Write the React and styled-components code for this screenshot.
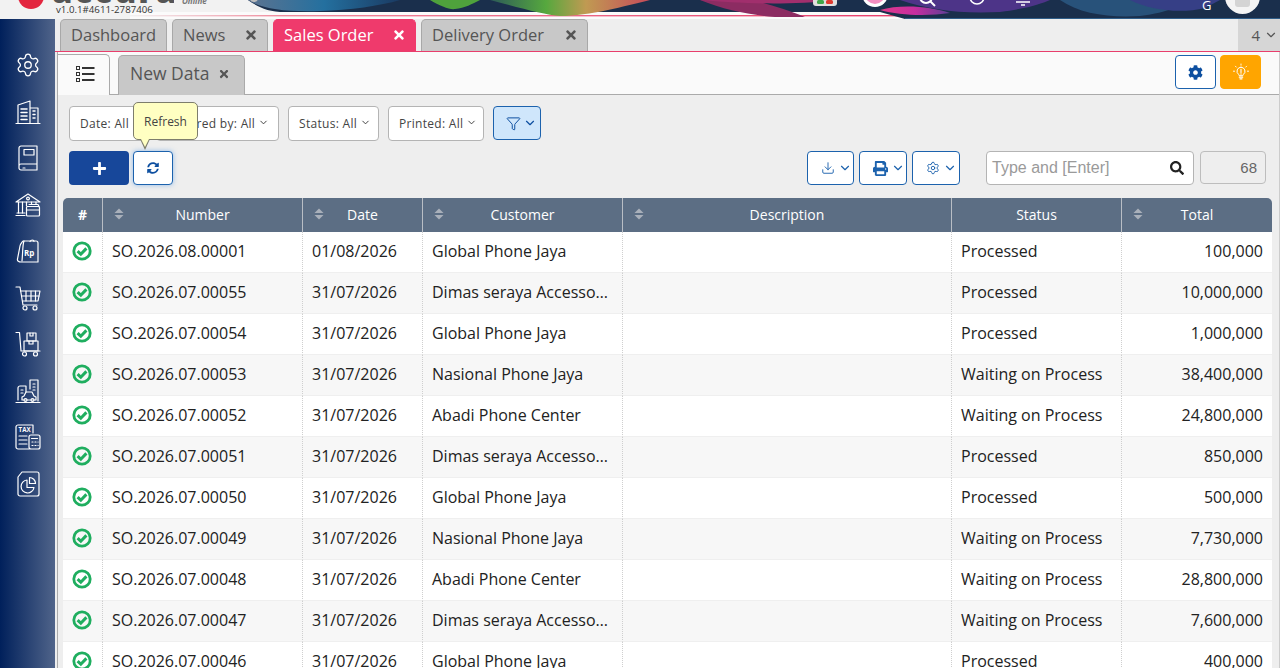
import React from "react";
import styled, { createGlobalStyle } from "styled-components";
import { ChevronDown, Download, Funnel, Settings } from "lucide-react";
import { FaCog, FaPlus, FaPrint, FaSearch, FaSyncAlt, FaTimes } from "react-icons/fa";

const GlobalStyle = createGlobalStyle`
  html, body {
    margin: 0;
    padding: 0;
    height: 100%;
    overflow: hidden;
    background: #eeeeee;
    font-family: "Open Sans", "Noto Sans", sans-serif;
  }
  * { box-sizing: border-box; }
`;

const Page = styled.div`
  display: flex;
  flex-direction: column;
  height: 668px;
  overflow: hidden;
`;

/* ---------- banner ---------- */
const Banner = styled.header`
  position: relative;
  flex: 0 0 19px;
  display: flex;
  align-items: flex-start;
  overflow: hidden;
  background: #f2f2f2;
`;

const BannerArt = styled.svg`
  position: absolute;
  inset: 0;
  width: 1280px;
  height: 19px;
`;

const LogoMark = styled.div`
  position: relative;
  flex: none;
  width: 26px;
  height: 26px;
  margin: -17px 0 0 18px;
  border-radius: 50%;
  background: #e3263f;
`;

const LogoBlock = styled.div`
  position: relative;
  width: 122px;
  margin-left: 8px;
`;

const LogoWord = styled.div`
  height: 5px;
  overflow: hidden;
  font-size: 33px;
  font-weight: 800;
  color: #555;
  letter-spacing: 2px;
  white-space: nowrap;

  span {
    display: block;
    margin-top: -26px;
    line-height: 33px;
  }
`;

const Version = styled.div`
  margin: 0 0 0 4px;
  font-size: 9.7px;
  line-height: 10px;
  color: #333;
  white-space: nowrap;
`;

const OnlineTag = styled.div`
  position: relative;
  margin: -3px 0 0 8px;
  font-size: 8px;
  line-height: 8px;
  font-style: italic;
  font-weight: 700;
  color: #777;
`;

const UserLetter = styled.div`
  position: absolute;
  left: 1202px;
  top: -2px;
  font-size: 13px;
  line-height: 14px;
  color: #fff;
`;

const UserAvatar = styled.div`
  position: absolute;
  left: 1225px;
  top: -21px;
  width: 35px;
  height: 35px;
  border-radius: 50%;
  background: #f4f4f4;
  display: flex;
  align-items: flex-end;
  justify-content: center;
  padding-bottom: 7px;

  &::after {
    content: "";
    width: 15px;
    height: 15px;
    border-radius: 3px;
    background: #d4d4d4;
  }
`;

/* ---------- frame ---------- */
const Body = styled.div`
  flex: 1;
  display: flex;
  min-height: 0;
`;

const Sidebar = styled.nav`
  flex: 0 0 55px;
  display: flex;
  flex-direction: column;
  align-items: center;
  gap: 20.5px;
  padding: 33px 0 0;
  background: linear-gradient(90deg, #00205b 0%, #50648a 100%);
`;

const SideIcon = styled.svg`
  flex: none;
  width: 26px;
  height: 26px;
  fill: none;
  stroke: #fff;
  stroke-width: 1.2;
  stroke-linecap: round;
  stroke-linejoin: round;

  text {
    fill: #fff;
    stroke: none;
    font-family: "Open Sans", sans-serif;
    font-weight: 700;
  }
`;

const Main = styled.main`
  flex: 1;
  min-width: 0;
  display: flex;
  flex-direction: column;
`;

const TabBar = styled.div`
  flex: 0 0 33px;
  display: flex;
  align-items: flex-end;
  gap: 5px;
  padding-left: 5px;
  border-bottom: 1px solid #e83e6c;
  background: #eeeeee;
`;

const Tab = styled.div`
  height: 32px;
  display: flex;
  align-items: center;
  justify-content: space-between;
  width: ${(p) => p.$w}px;
  padding: 0 9px 2px 10px;
  border: 1px solid ${(p) => (p.$active ? "#ef3a6c" : "#a8a8a8")};
  border-bottom: none;
  border-radius: 5px 5px 0 0;
  background: ${(p) => (p.$active ? "#ef3a6c" : "#c8c8c8")};
  color: ${(p) => (p.$active ? "#fff" : "#555")};
  font-size: 16.5px;
  white-space: nowrap;

  svg {
    font-size: 14px;
    margin-top: 1px;
    color: ${(p) => (p.$active ? "#fff" : "#555")};
  }
`;

const TabCount = styled.div`
  margin-left: auto;
  width: 42px;
  height: 32px;
  display: flex;
  align-items: center;
  justify-content: flex-end;
  gap: 4px;
  padding-right: 2px;
  background: #d6d6d6;
  color: #555;
  font-size: 15px;
`;

const Workspace = styled.section`
  flex: 1;
  min-height: 0;
  margin-left: 2px;
  border-left: 1px solid #aaa;
  border-right: 1px solid #ccc;
  background: #eeeeee;
`;

const SubHeader = styled.div`
  height: 43px;
  display: flex;
  align-items: flex-end;
  gap: 8px;
  padding: 0 18px 0 0;
  border-bottom: 1px solid #aaa;
  background: #fafafa;
`;

const ListTab = styled.div`
  width: 52px;
  height: 41px;
  margin-bottom: -1px;
  display: flex;
  align-items: center;
  justify-content: center;
  padding: 0 0 2px 2px;
  border: 1px solid #aaa;
  border-left: none;
  border-bottom: none;
  border-radius: 0 5px 0 0;
  background: #fafafa;
`;

const SubTab = styled.div`
  width: 127px;
  height: 40px;
  margin-bottom: -1px;
  display: flex;
  align-items: center;
  gap: 8px;
  padding: 0 0 5px 11px;
  border: 1px solid #aaa;
  border-bottom: none;
  border-radius: 5px 5px 0 0;
  background: #c8c8c8;
  color: #555;
  font-size: 17.5px;
  white-space: nowrap;

  svg {
    font-size: 12px;
    margin-top: 2px;
  }
`;

const SubActions = styled.div`
  margin: 0 0 5px auto;
  display: flex;
  gap: 4px;
`;

const ActionButton = styled.button`
  width: 41px;
  height: 34px;
  display: flex;
  align-items: center;
  justify-content: center;
  padding: 0;
  border: 1px solid ${(p) => (p.$orange ? "#ffa500" : "#1c62ad")};
  border-radius: 4px;
  background: ${(p) => (p.$orange ? "#ffa500" : "#fff")};
  color: #0d4fa0;
  font-size: 15px;
`;

const Content = styled.div`
  padding: 11px 6px 0 5px;
`;

const FilterRow = styled.div`
  display: flex;
  gap: 9px;
  padding-left: 6px;
`;

const FilterButton = styled.button`
  position: relative;
  height: 35px;
  width: ${(p) => p.$w}px;
  display: flex;
  align-items: center;
  gap: 3px;
  padding: 0 0 0 10px;
  border: 1px solid #b4b4b4;
  border-radius: 4px;
  background: #fff;
  color: #444;
  font: 400 12px "Open Sans", sans-serif;
  letter-spacing: 0.3px;
  white-space: nowrap;

  svg {
    color: #333;
    margin-top: -3px;
  }
`;

const FunnelButton = styled.button`
  width: 48px;
  height: 34px;
  display: flex;
  align-items: center;
  gap: 2px;
  padding: 0 0 0 12px;
  border: 1px solid #1c62ad;
  border-radius: 4px;
  background: #cfe6fb;
  color: #0d4fa0;
`;

const ToolRow = styled.div`
  display: flex;
  align-items: flex-start;
  margin-top: 10px;
  padding: 0 7px 0 6px;
`;

const AddButton = styled.button`
  width: 60px;
  height: 34px;
  display: flex;
  align-items: center;
  justify-content: center;
  padding: 0;
  border: none;
  border-radius: 4px;
  background: #17479a;
  color: #fff;
  font-size: 15px;
`;

const RefreshWrap = styled.div`
  position: relative;
  margin-left: 4px;
`;

const RefreshButton = styled.button`
  width: 40px;
  height: 34px;
  display: flex;
  align-items: center;
  justify-content: center;
  padding: 0;
  border: 1px solid #1c62ad;
  border-radius: 4px;
  background: #fff;
  box-shadow: 0 0 5px rgba(60, 140, 230, 0.5);
  color: #0d4fa0;
  font-size: 12px;
`;

const Tooltip = styled.div`
  position: absolute;
  left: 0;
  top: -49px;
  width: 65px;
  height: 38px;
  display: flex;
  align-items: center;
  justify-content: center;
  border: 1px solid #7d7d6c;
  border-radius: 5px;
  background: #ffffc2;
  color: #444;
  font-size: 12px;

  &::after {
    content: "";
    position: absolute;
    left: 6px;
    bottom: -11px;
    border-left: 5px solid transparent;
    border-right: 5px solid transparent;
    border-top: 11px solid #7d7d6c;
  }

  &::before {
    content: "";
    position: absolute;
    z-index: 1;
    left: 7px;
    bottom: -8px;
    border-left: 4px solid transparent;
    border-right: 4px solid transparent;
    border-top: 8px solid #ffffc2;
  }
`;

const OutlineGroup = styled.div`
  margin-left: auto;
  display: flex;
  gap: 5px;
`;

const OutlineButton = styled.button`
  width: ${(p) => p.$w}px;
  height: 34px;
  display: flex;
  align-items: center;
  gap: 3px;
  padding: 0 0 0 13px;
  border: 1px solid #1c62ad;
  border-radius: 4px;
  background: #fff;
  color: #1c62ad;
`;

const SearchBox = styled.div`
  width: 208px;
  height: 34px;
  margin-left: 26px;
  display: flex;
  align-items: center;
  justify-content: space-between;
  padding: 0 9px 0 5px;
  border: 1px solid #b4b4b4;
  border-radius: 4px;
  background: #fff;
  color: #9a9a9a;
  font: 400 16px "Liberation Sans", Arial, sans-serif;

  svg {
    color: #222;
    font-size: 14px;
  }
`;

const CountBox = styled.div`
  width: 66px;
  height: 33px;
  margin-left: 6px;
  display: flex;
  align-items: center;
  justify-content: flex-end;
  padding-right: 8px;
  border: 1px solid #bdbdbd;
  border-radius: 4px;
  color: #666;
  font: 400 15px "Liberation Sans", Arial, sans-serif;
`;

/* ---------- table ---------- */
const Table = styled.table`
  width: 1209px;
  margin-top: 13px;
  table-layout: fixed;
  border-collapse: separate;
  border-spacing: 0;
  font-size: 16px;
  color: #222;
`;

const Head = styled.th`
  height: 34px;
  padding: 0 11px 2px;
  background: #5c6e84;
  border-left: ${(p) => (p.$first ? "none" : "1px solid #b9bec5")};
  border-radius: ${(p) =>
    p.$first ? "5px 0 0 0" : p.$last ? "0 5px 0 0" : "0"};
  color: #fff;
  font-size: 14px;
  font-weight: ${(p) => (p.$first ? 700 : 400)};
`;

const HeadInner = styled.div`
  display: grid;
  grid-template-columns: 1fr auto 1fr;
  align-items: center;
`;

const SortSlot = styled.span`
  justify-self: start;
  display: flex;
`;

const Cell = styled.td`
  height: 41px;
  padding: ${(p) =>
    p.$first ? "0 1px 0 0" : p.$right ? "0 9px 2px 9px" : "0 13px 2px 9px"};
  border-left: ${(p) => (p.$first ? "none" : "1px dotted #cfcfcf")};
  border-bottom: 1px solid #efefef;
  background: ${(p) => (p.$alt ? "#f7f7f7" : "#fff")};
  text-align: ${(p) => (p.$right ? "right" : "left")};
  white-space: nowrap;
  overflow: hidden;
  text-overflow: ellipsis;
`;

const CheckSvg = styled.svg`
  display: block;
  width: 20px;
  height: 20px;
  margin: -2px auto 0;
  fill: none;
  stroke: #1fae5f;
`;

const Chevron = () => <ChevronDown size={14} strokeWidth={2} />;

const SortIcon = () => (
  <svg width="10" height="12" viewBox="0 0 10 12" fill="#a9b0ba">
    <path d="M5 0.5 L9.5 5 H0.5 Z" />
    <path d="M5 11.5 L9.5 7 H0.5 Z" />
  </svg>
);

const CheckIcon = () => (
  <CheckSvg viewBox="0 0 20 20">
    <circle cx="10" cy="10" r="8.2" strokeWidth="2.8" />
    <path d="M5.6 10.2 L8.8 13.2 L14.4 7.4" strokeWidth="3" />
  </CheckSvg>
);

const columns = [
  { label: "#", width: 39 },
  { label: "Number", width: 200, sort: true },
  { label: "Date", width: 120, sort: true },
  { label: "Customer", width: 200, sort: true },
  { label: "Description", width: 329, sort: true },
  { label: "Status", width: 170 },
  { label: "Total", width: 151, sort: true },
];

const rows = [
  ["SO.2026.08.00001", "01/08/2026", "Global Phone Jaya", "Processed", "100,000"],
  ["SO.2026.07.00055", "31/07/2026", "Dimas seraya Accessories", "Processed", "10,000,000"],
  ["SO.2026.07.00054", "31/07/2026", "Global Phone Jaya", "Processed", "1,000,000"],
  ["SO.2026.07.00053", "31/07/2026", "Nasional Phone Jaya", "Waiting on Process", "38,400,000"],
  ["SO.2026.07.00052", "31/07/2026", "Abadi Phone Center", "Waiting on Process", "24,800,000"],
  ["SO.2026.07.00051", "31/07/2026", "Dimas seraya Accessories", "Processed", "850,000"],
  ["SO.2026.07.00050", "31/07/2026", "Global Phone Jaya", "Processed", "500,000"],
  ["SO.2026.07.00049", "31/07/2026", "Nasional Phone Jaya", "Waiting on Process", "7,730,000"],
  ["SO.2026.07.00048", "31/07/2026", "Abadi Phone Center", "Waiting on Process", "28,800,000"],
  ["SO.2026.07.00047", "31/07/2026", "Dimas seraya Accessories", "Waiting on Process", "7,600,000"],
  ["SO.2026.07.00046", "31/07/2026", "Global Phone Jaya", "Processed", "400,000"],
];

const filters = [
  { label: "Date: All", width: 78 },
  { label: "Ordered by: All", width: 123 },
  { label: "Status: All", width: 91 },
  { label: "Printed: All", width: 96 },
];

const BannerDrawing = () => (
  <BannerArt viewBox="0 0 1280 19" preserveAspectRatio="none">
    <defs>
      <linearGradient id="blueBand" x1="0" x2="1">
        <stop offset="0" stopColor="#5d7390" />
        <stop offset="0.5" stopColor="#24709f" />
        <stop offset="1" stopColor="#1a3a62" />
      </linearGradient>
      <linearGradient id="rainbow" x1="0" x2="1">
        <stop offset="0" stopColor="#2c5a58" />
        <stop offset="0.35" stopColor="#56a83e" />
        <stop offset="0.6" stopColor="#c09a52" />
        <stop offset="1" stopColor="#c64a5a" />
      </linearGradient>
      <linearGradient id="pinkLine" x1="0" x2="1">
        <stop offset="0" stopColor="#f2f2f2" />
        <stop offset="0.2" stopColor="#f08a9c" />
        <stop offset="1" stopColor="#e83e6c" />
      </linearGradient>
      <linearGradient id="magenta" x1="0" x2="1">
        <stop offset="0" stopColor="#e03a8a" />
        <stop offset="0.5" stopColor="#c52ea0" />
        <stop offset="1" stopColor="#5b3f96" />
      </linearGradient>
    </defs>
    <rect x="130" y="12" width="780" height="7" fill="#fbfbfb" />
    <rect x="130" y="15" width="770" height="1.4" fill="url(#pinkLine)" />
    <path d="M248 0 C258 7 268 12 285 12 H880 L905 19 H1280 V0 Z" fill="#1a2f4c" />
    <path d="M248 0 C262 9 285 12 320 11 C350 10 380 6 400 0 Z" fill="url(#blueBand)" />
    <path d="M430 0 C440 6 450 10 455 9 C465 8 472 4 480 0 Z" fill="#4fa23c" />
    <path d="M490 0 C520 8 545 15 560 16 C590 16 625 6 650 0 Z" fill="url(#rainbow)" />
    <path d="M700 0 C725 10 750 15 775 17 L805 17 C790 10 765 4 755 0 Z" fill="#8c2c62" />
    <path d="M700 0 C740 3 780 6 840 0 Z" fill="#a12f6d" />
    <path d="M880 10 C900 16 930 16 950 13 C930 6 900 4 880 10 Z" fill="url(#magenta)" />
    <path d="M900 0 C930 10 960 14 1000 12 C1030 8 1040 4 1050 0 Z" fill="#4d3488" />
    <path d="M1060 0 C1080 14 1110 18 1140 16 C1170 12 1180 6 1185 0 Z" fill="#28527a" />
    <path d="M1130 0 C1150 10 1180 14 1205 8 L1220 0 Z" fill="#363f86" />
    <rect x="905" y="18" width="375" height="1" fill="#2f5e8a" />
    <rect x="813" y="-6" width="24" height="12" rx="3" fill="#e0dede" />
    <rect x="817" y="0" width="7" height="4" rx="1.5" fill="#3fa648" />
    <rect x="826" y="0" width="7" height="4" rx="1.5" fill="#e0392f" />
    <circle cx="875" cy="-6" r="13" fill="#fff" />
    <circle cx="875" cy="-6" r="10" fill="#f58fc1" />
    <circle cx="926" cy="-3" r="6" fill="none" stroke="#fff" strokeWidth="2" />
    <path d="M930 1 L935 6" stroke="#fff" strokeWidth="2" />
    <circle cx="977" cy="-3" r="7" fill="none" stroke="#fff" strokeWidth="1.6" />
    <path d="M1016 2 H1030 M1021 5 H1025" stroke="#fff" strokeWidth="1.6" />
    <circle cx="254" cy="-2" r="4" fill="#bdbdbd" />
  </BannerArt>
);

const ListIcon = () => (
  <svg width="20" height="18" viewBox="0 0 20 18" fill="none" stroke="#333">
    <rect x="1.5" y="1.5" width="3" height="3" strokeWidth="1" />
    <rect x="1.5" y="7.5" width="3" height="3" strokeWidth="1" />
    <rect x="1.5" y="13.5" width="3" height="3" strokeWidth="1" />
    <path d="M7 3h12.5M7 9h12.5M7 15h12.5" strokeWidth="2" />
  </svg>
);

const BulbIcon = () => (
  <svg width="18" height="18" viewBox="0 0 18 18" fill="none" stroke="#fff" strokeLinecap="round">
    <path d="M9 4.2a4 4 0 0 0-2.4 7.2c.4.4.6.8.6 1.3h3.6c0-.5.2-.9.6-1.3A4 4 0 0 0 9 4.2Z" strokeWidth="1" />
    <path d="M7.4 14.2h3.2M8 15.8h2" strokeWidth="1.3" />
    <path d="M9 6.2v3.4M9 10.8v.4" strokeWidth="1.1" />
    <path d="M9 1v1.2M3.4 3.2l.9.9M14.6 3.2l-.9.9M1.4 8.2h1.2M15.4 8.2h1.2" strokeWidth=".9" />
  </svg>
);

const sideIcons = [
  <SideIcon as={Settings} key="gear" strokeWidth={1.3} />,
  <SideIcon viewBox="0 0 26 26" key="company">
    <path d="M1 24.5h24M3 24V6L15 2v22M15 9h8v15" />
    <path d="M6 10h6M6 13.5h6M6 17h6M6 20.5h6" strokeWidth="1.5" />
    <path d="M18 12h2M18 15.5h2M18 19h2" strokeWidth="1.5" />
  </SideIcon>,
  <SideIcon viewBox="0 0 26 26" key="book">
    <path d="M4 21V3a2 2 0 0 1 2-2h16v24H6a2 2 0 0 1-2-2v-2a2 2 0 0 1 2-2h16" />
    <rect x="9" y="4.5" width="10" height="5.5" />
    <path d="M8 23h2" />
  </SideIcon>,
  <SideIcon viewBox="0 0 26 26" key="bank">
    <path d="M1 10 13 2l12 8H1Z" />
    <circle cx="13" cy="6.5" r="1.4" />
    <path d="M3.5 10v11M7.5 10v11M11.5 10v4M16.5 10v2M21 10v2" />
    <path d="M1 23.5h9M2 21h8" />
    <rect x="11.5" y="14.5" width="13" height="9.5" rx="1" />
    <path d="M11.5 18h13M14 12.5h9l1 2" />
  </SideIcon>,
  <SideIcon viewBox="0 0 26 26" key="bag">
    <path d="M8 3h8l5 0c1 0 2 1 2 2v19H6c-2 0-4-1-3.5-3L5 8c.3-2 1.5-3 3-5Z" />
    <path d="M9 3c-1.5 4-1 9-2 20M15 3.5c1-2 4-2 4 0" />
    <text x="9" y="18" fontSize="8">Rp</text>
  </SideIcon>,
  <SideIcon viewBox="0 0 26 26" key="cart">
    <path d="M1 2h4l3 18h14" />
    <path d="M5.5 6H25l-2 10H7.5" />
    <path d="M11 6v10M16 6v10M20.5 6v10M6.5 11h17.5" />
    <circle cx="10" cy="23" r="2" />
    <circle cx="20" cy="23" r="2" />
  </SideIcon>,
  <SideIcon viewBox="0 0 26 26" key="trolley">
    <path d="M1 1.5h3.5L6 20h19" />
    <rect x="9" y="10" width="14" height="10" />
    <rect x="12" y="2" width="9" height="8" />
    <path d="M15 2v3h3V2M14 10v3h4v-3" />
    <circle cx="9.5" cy="23" r="2" />
    <circle cx="20.5" cy="23" r="2" />
  </SideIcon>,
  <SideIcon viewBox="0 0 26 26" key="city">
    <path d="M1 24.5h24" />
    <path d="M3 22V10c0-1 1-2 2-2h6v6" />
    <path d="M15 11V2h8v21" />
    <path d="M18 6h2M18 9h2M18 12h2M6 12h2M6 15h2" />
    <path d="M7 22v-3l2-1 2-4h6l2 4 2 1v3H7Z" />
    <circle cx="10.5" cy="22" r="1.5" />
    <circle cx="17.5" cy="22" r="1.5" />
  </SideIcon>,
  <SideIcon viewBox="0 0 26 26" key="tax">
    <path d="M14 25H3c-1 0-2-1-2-2V3c0-1 1-2 2-2h15v8" />
    <text x="3.6" y="8" fontSize="6.2">TAX</text>
    <path d="M4 12h8M4 16h8M4 20h8" />
    <rect x="14" y="11" width="11" height="14" rx="2" />
    <path d="M16.5 14.5h6M17 18h1M20 18h1M23 18h.1M17 21.5h1M20 21.5h1M23 21.5h.1" />
  </SideIcon>,
  <SideIcon viewBox="0 0 26 26" key="report">
    <path d="M7 1h15c1 0 2 1 2 2v20c0 1-1 2-2 2H5c-1 0-2-1-2-2V6l4-5Z" />
    <path d="M12 9a6.5 6.5 0 1 0 7 7.5h-7V9Z" />
    <path d="M14.5 6.5a6 6 0 0 1 6 6h-6v-6Z" />
  </SideIcon>,
];

const App = () => (
  <Page>
    <GlobalStyle />
    <Banner>
      <BannerDrawing />
      <LogoMark />
      <LogoBlock>
        <LogoWord>
          <span>accurate</span>
        </LogoWord>
        <Version>v1.0.1#4611-2787406</Version>
      </LogoBlock>
      <OnlineTag>Online</OnlineTag>
      <UserLetter>G</UserLetter>
      <UserAvatar />
    </Banner>
    <Body>
      <Sidebar>{sideIcons}</Sidebar>
      <Main>
        <TabBar>
          <Tab $w={107}>Dashboard</Tab>
          <Tab $w={96}>
            News <FaTimes />
          </Tab>
          <Tab $w={143} $active>
            Sales Order <FaTimes />
          </Tab>
          <Tab $w={167}>
            Delivery Order <FaTimes />
          </Tab>
          <TabCount>
            4 <Chevron />
          </TabCount>
        </TabBar>
        <Workspace>
          <SubHeader>
            <ListTab>
              <ListIcon />
            </ListTab>
            <SubTab>
              New Data <FaTimes />
            </SubTab>
            <SubActions>
              <ActionButton>
                <FaCog />
              </ActionButton>
              <ActionButton $orange>
                <BulbIcon />
              </ActionButton>
            </SubActions>
          </SubHeader>
          <Content>
            <FilterRow>
              {filters.map((f) => (
                <FilterButton key={f.label} $w={f.width}>
                  {f.label} <ChevronDown size={11} strokeWidth={2} />
                </FilterButton>
              ))}
              <FunnelButton>
                <Funnel size={15} strokeWidth={1.6} />
                <Chevron />
              </FunnelButton>
            </FilterRow>
            <ToolRow>
              <AddButton>
                <FaPlus />
              </AddButton>
              <RefreshWrap>
                <RefreshButton>
                  <FaSyncAlt />
                </RefreshButton>
                <Tooltip>Refresh</Tooltip>
              </RefreshWrap>
              <OutlineGroup>
                <OutlineButton $w={47}>
                  <Download size={14} strokeWidth={1.6} />
                  <Chevron />
                </OutlineButton>
                <OutlineButton $w={48}>
                  <FaPrint size={15} />
                  <Chevron />
                </OutlineButton>
                <OutlineButton $w={48}>
                  <Settings size={14} strokeWidth={1.6} />
                  <Chevron />
                </OutlineButton>
              </OutlineGroup>
              <SearchBox>
                Type and [Enter]
                <FaSearch />
              </SearchBox>
              <CountBox>68</CountBox>
            </ToolRow>
            <Table>
              <colgroup>
                {columns.map((c) => (
                  <col key={c.label} width={c.width} />
                ))}
              </colgroup>
              <thead>
                <tr>
                  {columns.map((c, i) => (
                    <Head key={c.label} $first={i === 0} $last={i === columns.length - 1}>
                      <HeadInner>
                        <SortSlot>{c.sort && <SortIcon />}</SortSlot>
                        {c.label}
                      </HeadInner>
                    </Head>
                  ))}
                </tr>
              </thead>
              <tbody>
                {rows.map((r, idx) => {
                  const alt = idx % 2 === 1;
                  return (
                    <tr key={r[0]}>
                      <Cell $first $alt={alt}>
                        <CheckIcon />
                      </Cell>
                      <Cell $alt={alt}>{r[0]}</Cell>
                      <Cell $alt={alt}>{r[1]}</Cell>
                      <Cell $alt={alt}>{r[2]}</Cell>
                      <Cell $alt={alt} />
                      <Cell $alt={alt}>{r[3]}</Cell>
                      <Cell $alt={alt} $right>
                        {r[4]}
                      </Cell>
                    </tr>
                  );
                })}
              </tbody>
            </Table>
          </Content>
        </Workspace>
      </Main>
    </Body>
  </Page>
);

export default App;
